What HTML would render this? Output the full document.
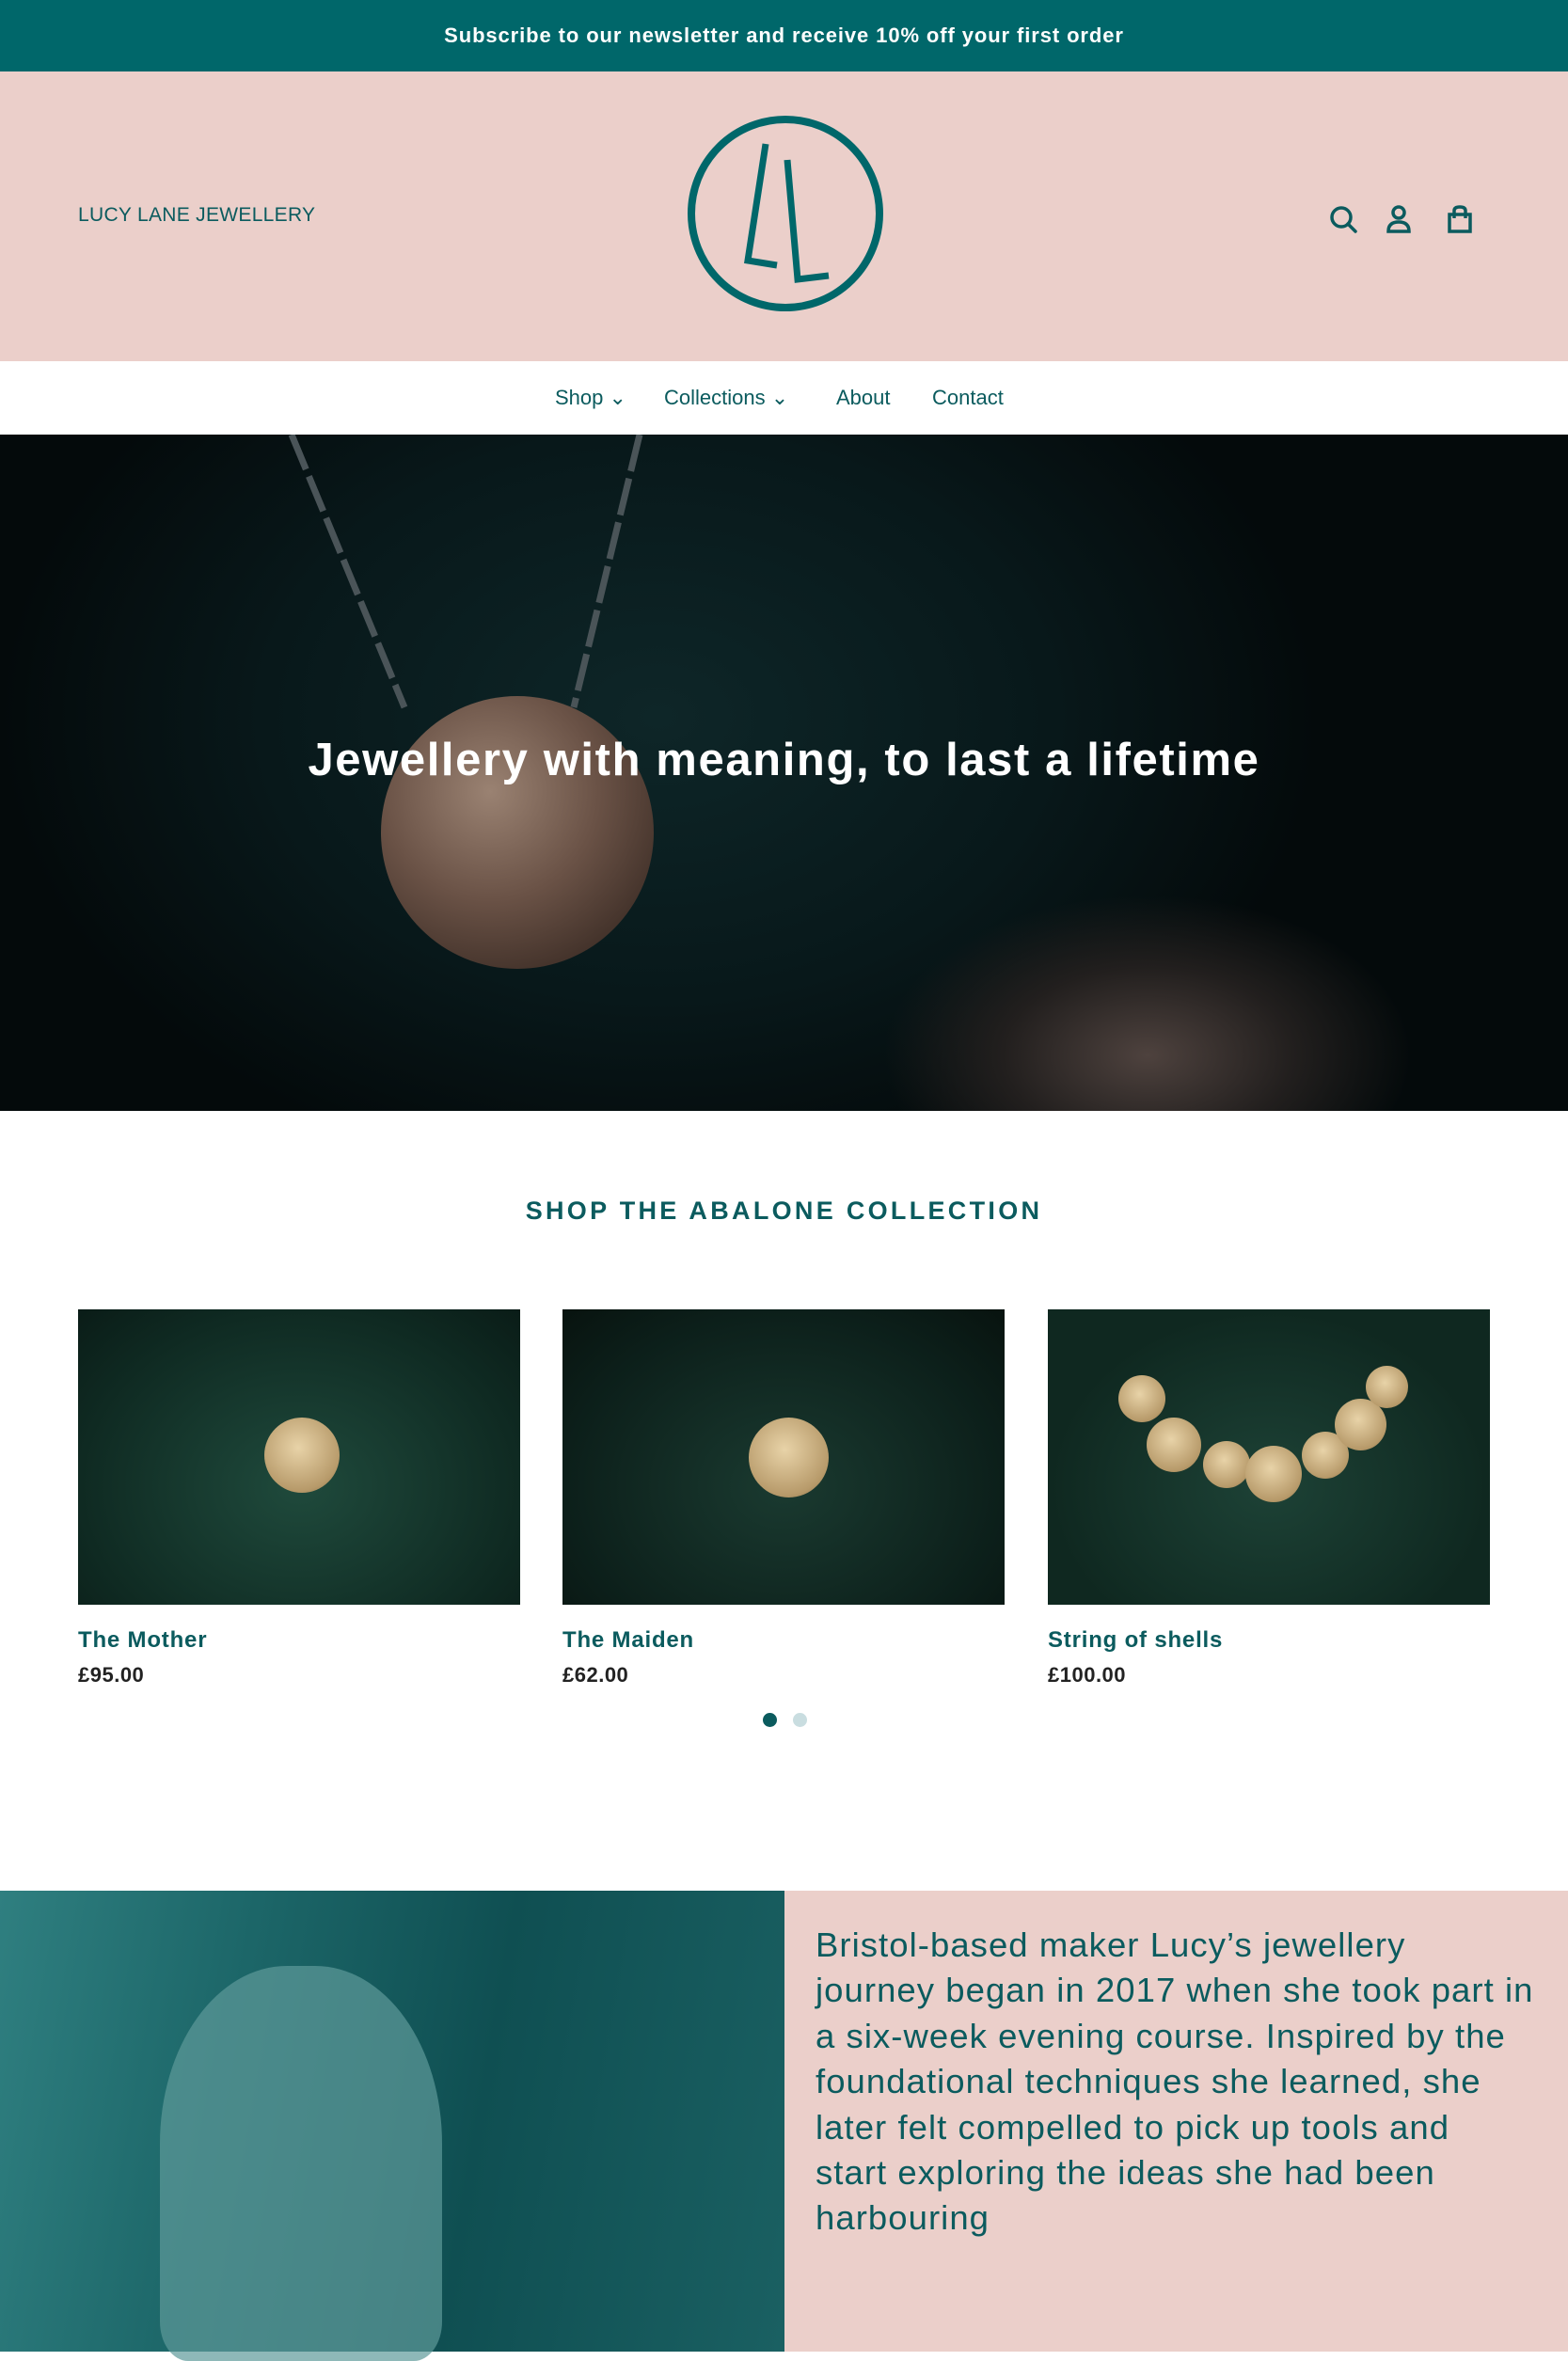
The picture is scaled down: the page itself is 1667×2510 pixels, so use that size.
<!DOCTYPE html>
<html><head><meta charset="utf-8"><style>
*{margin:0;padding:0;box-sizing:border-box}
body{width:1667px;height:2500px;overflow:hidden;font-family:"Liberation Sans",sans-serif;background:#fff;color:#0b5b5e;position:relative}
.a{position:absolute}
.top{left:0;top:0;width:1667px;height:76px;background:#00676a;color:#fff;font-size:22px;font-weight:bold;text-align:center;line-height:76px;letter-spacing:.9px}
.hdr{left:0;top:76px;width:1667px;height:308px;background:#ebcfca}
.nav{top:384px;left:0;width:1667px;height:78px;font-size:22px;line-height:78px;color:#0b5b5e}
.hero{left:0;top:462px;width:1667px;height:719px;background:radial-gradient(ellipse 280px 170px at 1220px 660px,#4e423e 0%,#221f1e 55%,transparent 100%),radial-gradient(ellipse 700px 500px at 700px 300px,#0e2628 0%,#08181a 60%,#040a0b 100%)}
.pend{left:405px;top:740px;width:290px;height:290px;border-radius:50%;background:radial-gradient(circle at 40% 35%,#9a8272,#6a5246 45%,#3a2b24 85%,#2a1f1a)}
.ht{left:0;top:780px;width:1667px;text-align:center;color:#fff;font-size:49px;font-weight:bold;letter-spacing:1.6px}
.h2{left:0;top:1272px;width:1667px;text-align:center;font-size:27px;font-weight:bold;letter-spacing:3.3px;color:#0b5b5e}
.img{top:1392px;width:470px;height:314px;background:radial-gradient(ellipse at 50% 60%,#1f4a3c,#0f2a22 70%,#0a1c17)}
.pt{top:1730px;font-size:24px;font-weight:bold;color:#0b5b5e;letter-spacing:.8px}
.pp{top:1768px;font-size:22px;font-weight:bold;color:#222;letter-spacing:.5px}
.gold{border-radius:50%;background:radial-gradient(circle at 45% 40%,#e8d3a8,#b79a6a 70%,#7d6440)}
.bot{left:834px;top:2010px;width:833px;height:490px;background:#ebcfca}
.bt{left:867px;top:2044px;width:795px;font-size:36.5px;line-height:48.4px;color:#0b5b5e;letter-spacing:1.05px}
.ph{left:0;top:2010px;width:834px;height:490px;background:linear-gradient(100deg,#2f7f80 0%,#1c6668 30%,#0f4f52 60%,#1a6062 100%)}
</style></head><body>
<div class="a top">Subscribe to our newsletter and receive 10% off your first order</div>
<div class="a hdr"></div>
<div class="a" style="left:83px;top:217px;font-size:21px;color:#0b5b5e;letter-spacing:.3px">LUCY LANE JEWELLERY</div>
<svg class="a" style="left:720px;top:114px" width="230" height="230" viewBox="720 114 230 230">
<circle cx="835" cy="227" r="100" fill="none" stroke="#00676a" stroke-width="8"/>
<path d="M814 153 L795 277 L826 282 M837 170 L848 297 L881 293" fill="none" stroke="#00676a" stroke-width="7"/>
</svg>
<svg class="a" style="left:1410px;top:215px" width="160" height="40" viewBox="0 0 160 40" fill="none" stroke="#0b5b5e" stroke-width="3.5">
<circle cx="16" cy="16" r="10"/><path d="M23 23 L31 31" stroke-linecap="round"/>
<circle cx="77" cy="11" r="6"/><path d="M66 31 Q66 21 77 21 Q88 21 88 31 Z"/>
<path d="M131 13 L131 31 L153 31 L153 13 Z M136 17 L136 9 Q136 5 142 5 Q148 5 148 9 L148 17"/>
</svg>
<div class="a nav">
<span class="a" style="left:590px">Shop ⌄</span>
<span class="a" style="left:706px">Collections ⌄</span>
<span class="a" style="left:889px">About</span>
<span class="a" style="left:991px">Contact</span>
</div>
<div class="a hero"></div>
<svg class="a" style="left:0;top:462px" width="1667" height="719">
<path d="M310 0 L430 290 M680 0 L610 290" stroke="#4a5458" stroke-width="7" fill="none" stroke-dasharray="40 8"/>
</svg>
<div class="a pend"></div>
<div class="a ht">Jewellery with meaning, to last a lifetime</div>
<div class="a h2">SHOP THE ABALONE COLLECTION</div>
<div class="a img" style="left:83px"><div class="a gold" style="left:198px;top:115px;width:80px;height:80px"></div></div>
<div class="a img" style="left:598px;background:radial-gradient(ellipse at 50% 60%,#1a3a30,#0c1f1a 70%,#08130f)"><div class="a gold" style="left:198px;top:115px;width:85px;height:85px"></div></div>
<div class="a img" style="left:1114px;background:radial-gradient(ellipse at 50% 60%,#1d4236,#0f2820 70%)">
<div class="a gold" style="left:75px;top:70px;width:50px;height:50px"></div><div class="a gold" style="left:105px;top:115px;width:58px;height:58px"></div><div class="a gold" style="left:165px;top:140px;width:50px;height:50px"></div><div class="a gold" style="left:210px;top:145px;width:60px;height:60px"></div><div class="a gold" style="left:270px;top:130px;width:50px;height:50px"></div><div class="a gold" style="left:305px;top:95px;width:55px;height:55px"></div><div class="a gold" style="left:338px;top:60px;width:45px;height:45px"></div></div>
<div class="a pt" style="left:83px">The Mother</div><div class="a pp" style="left:83px">£95.00</div>
<div class="a pt" style="left:598px">The Maiden</div><div class="a pp" style="left:598px">£62.00</div>
<div class="a pt" style="left:1114px">String of shells</div><div class="a pp" style="left:1114px">£100.00</div>
<div class="a" style="left:811px;top:1821px;width:15px;height:15px;border-radius:50%;background:#0b5b5e"></div>
<div class="a" style="left:843px;top:1821px;width:15px;height:15px;border-radius:50%;background:#c9dde0"></div>
<div class="a ph"></div>
<div class="a" style="left:170px;top:2090px;width:300px;height:420px;border-radius:45% 45% 10% 10%;background:#5e9a9a;opacity:.7"></div>
<div class="a bot"></div>
<div class="a bt">Bristol-based maker Lucy’s jewellery<br>journey began in 2017 when she took part in<br>a six-week evening course. Inspired by the<br>foundational techniques she learned, she<br>later felt compelled to pick up tools and<br>start exploring the ideas she had been<br>harbouring</div>
</body></html>
